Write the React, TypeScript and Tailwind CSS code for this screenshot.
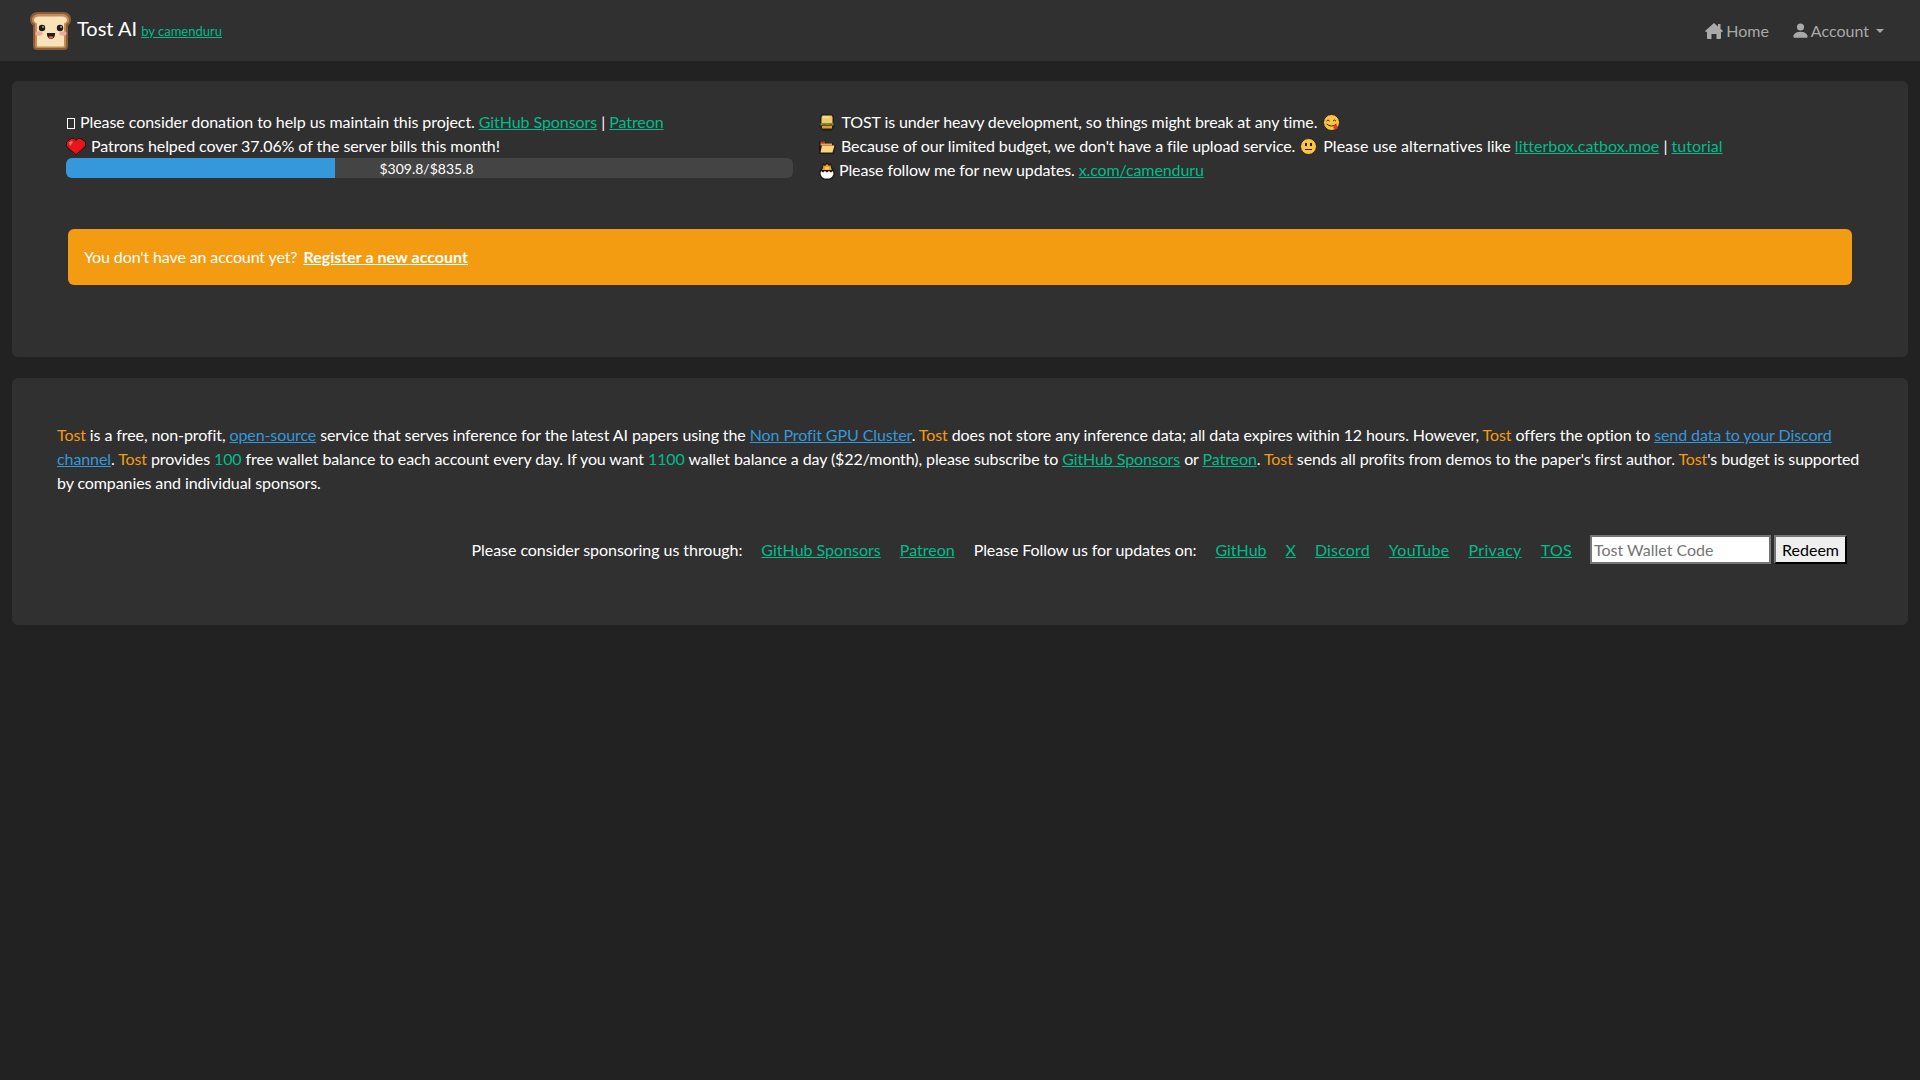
import React from 'react';
import { BsPersonFill } from 'react-icons/bs';

const linkClass = 'text-[#00bc8c] underline';
const blueClass = 'text-[#3498db] underline';
const tostClass = 'text-[#f39c12]';
const greenClass = 'text-[#00bc8c]';

function Toast() {
    return (
        <svg width="41" height="38" viewBox="0 0 41 38" className="shrink-0">
            <path d="M8 0h25c5 0 8 3 8 7.500 0 3-1.500 5-3 6v20.500c0 2.500-1.500 4-3.500 4H6.500C4.500 38 3 36.500 3 34V13.500C1.500 12.500 0 10.500 0 7.500 0 3 3 0 8 0z" fill="#8a5c38" />
            <path d="M9 2h23c4 0 7 2.500 7 5.500 0 2-1 3.500-3 4.500v21.500c0 1.500-.5 2.500-2 2.500H7c-1.500 0-2-1-2-2.500V12C3 11 2 9.500 2 7.500 2 4.500 5 2 9 2z" fill="#c48d58" />
            <path d="M9 4.500h23c3 0 5 1.500 5 3.500 0 1.500-1 2.500-3 3.500V33c0 1-.5 1.500-1 1.500H8c-.5 0-1-.5-1-1.500V11.500C5 10.500 4 9.500 4 8c0-2 2-3.500 5-3.500z" fill="#f8e2b8" />
            <circle cx="12" cy="16" r="3.200" fill="#1d1a1a" />
            <circle cx="30" cy="16" r="3.200" fill="#1d1a1a" />
            <circle cx="13" cy="15" r="0.800" fill="#ffffff" />
            <circle cx="31" cy="15" r="0.800" fill="#ffffff" />
            <ellipse cx="9" cy="21.500" rx="3.600" ry="2.200" fill="#f4a79b" />
            <ellipse cx="33" cy="21.500" rx="3.600" ry="2.200" fill="#f4a79b" />
            <path d="M17 21h8c.5 3-1.500 6-4 6s-4.500-3-4-6z" fill="#2a1a1a" />
            <path d="M18.500 25c1-1 4-1 5 0-.5 1-1.500 1.500-2.500 1.500s-2-.5-2.500-1.500z" fill="#e8625f" />
        </svg>
    );
}

function HomeIcon() {
    return (
        <svg width="18" height="16" viewBox="0 0 18 16" className="mr-[3px]" fill="currentColor">
            <path d="M9 0l4 3.500V1h2.500v4.700L18 8l-1 1.200-1-.8V15a1 1 0 0 1-1 1h-3.500v-5h-5v5H3a1 1 0 0 1-1-1V8.400l-1 .8L0 8z" />
        </svg>
    );
}

function Heart() {
    return (
        <svg width="20" height="17" viewBox="0 0 20 17" className="mr-[1px] inline-block align-[-3px]">
            <path d="M5 .5h3L10 2.500 12 .5h3L19.500 4v4L17 11l-7 5.500L3 11 .5 8V4z" fill="#e8141e" stroke="#2a0808" strokeWidth="1" />
            <path d="M3 4.500L5.500 3 7 4 4 8z" fill="#f9707a" />
            <path d="M12 13.500l5-4 1-2 0 2-4 4z" fill="#a80e16" />
        </svg>
    );
}

function Sandwich() {
    return (
        <svg width="16" height="17" viewBox="0 0 16 17" className="ml-[1px] mr-[3px] inline-block align-[-3px]">
            <path d="M3 0h10l2 2v8l1 2-2 3-2 2H4l-2-2-2-3 1-2V2z" fill="#1f2418" />
            <path d="M3.500 1.500h9l1 1.500V9h-11V3z" fill="#f4c76a" />
            <rect x="4" y="2.500" width="6" height="1.500" fill="#fbe29a" />
            <rect x="1.500" y="9" width="13" height="2.500" fill="#5aa02c" />
            <rect x="4" y="10" width="3" height="1.500" fill="#d83a2a" />
            <rect x="10" y="10" width="3" height="1.500" fill="#d83a2a" />
            <rect x="3" y="12" width="10" height="2.500" fill="#d89a3e" />
        </svg>
    );
}

function Folder() {
    return (
        <svg width="17" height="14" viewBox="0 0 17 14" className="ml-[1px] mr-[1px] inline-block align-[-2px]">
            <path d="M1 1h5l1.500 2H14v2h3l-2.500 9H0V2z" fill="#1d1a14" />
            <rect x="1.500" y="1.500" width="4.500" height="2" fill="#cf3a2c" />
            <path d="M3 5.500h12.500L13.500 12.500H1.500z" fill="#fdd27c" />
            <rect x="1.500" y="3.500" width="11.500" height="2" fill="#e9a94a" />
        </svg>
    );
}

function Hatch() {
    return (
        <svg width="16" height="18" viewBox="0 0 16 18" className="ml-[1px] inline-block align-[-4px]">
            <path d="M4 1l2 1.500L8 0l2 2.500L12 1l1 4 2 3 1 4-2 4-3 2H5l-3-2-2-4 1-4 2-3z" fill="#1d1a14" />
            <path d="M4.500 3l1.500 1 2-2 2 2 1.500-1 .5 3 1 2H3l1-2z" fill="#f59a23" />
            <rect x="6" y="5" width="4" height="2.500" fill="#fbd34c" />
            <path d="M2 9l2 1.500 2-1.500 2 1.500L10 9l2 1.500L14 9l.5 3-1.500 3-2.500 1.500h-5L3 15l-1.500-3z" fill="#ffffff" />
        </svg>
    );
}

function YumFace() {
    return (
        <svg width="17" height="17" viewBox="0 0 17 17" className="ml-[2px] inline-block align-[-3px]">
            <circle cx="8.500" cy="8.500" r="8" fill="#fcc246" stroke="#2a2218" strokeWidth="1" />
            <path d="M3.500 7q1.500-2 3 0M10 7q1.500-2 3 0" fill="none" stroke="#3a2a14" strokeWidth="1" />
            <path d="M3.500 10q5 4 10 0" fill="none" stroke="#3a2a14" strokeWidth="1" />
            <circle cx="12.500" cy="13" r="2.200" fill="#e0392b" />
        </svg>
    );
}

function NeutralFace() {
    return (
        <svg width="17" height="17" viewBox="0 0 17 17" className="ml-[1px] mr-[2px] inline-block align-[-3px]">
            <circle cx="8.500" cy="8.500" r="8" fill="#fcc246" stroke="#2a2218" strokeWidth="1" />
            <rect x="5" y="5" width="2" height="3" fill="#2a2218" />
            <rect x="10" y="5" width="2" height="3" fill="#2a2218" />
            <rect x="5" y="11" width="7" height="1" fill="#2a2218" />
        </svg>
    );
}

export default function App() {
    return (
        <div className="min-h-[1080px] bg-[#222222] text-[16px] leading-[24px] text-white" style={{ fontFamily: 'Lato, sans-serif' }}>
            {/* Navbar */}
            <nav className="flex h-[61px] items-center justify-between bg-[#303030] pl-[30px] pr-[36px]">
                <div className="flex items-center">
                    <Toast />
                    <span className="mb-[6px] ml-[6px] text-[20px]">Tost AI</span>
                    <a className={`ml-[4px] mt-[1px] text-[13px] ${linkClass}`}>by camenduru</a>
                </div>
                <div className="flex items-center gap-[22px] text-[#a9a9a9]">
                    <a className="flex items-center"><HomeIcon />Home</a>
                    <a className="flex items-center">
                        <BsPersonFill className="mr-[1px] h-[19px] w-[19px]" />Account
                        <span className="ml-[7px] h-0 w-0 border-x-[4px] border-t-[4px] border-x-transparent border-t-[#a9a9a9]"></span>
                    </a>
                </div>
            </nav>

            {/* Notices */}
            <section className="mx-[12px] mt-[20px] h-[276px] rounded-[6px] bg-[#303030] pl-[54px] pr-[56px] pt-[29px]">
                <div className="flex">
                    <div className="w-[727px] tracking-[-0.07px]">
                        <div><span className="ml-[1px] mr-[1px] inline-block h-[11px] w-[8px] border border-white align-[-1px]"></span> Please consider donation to help us maintain this project. <a className={linkClass}>GitHub Sponsors</a> | <a className={linkClass}>Patreon</a></div>
                        <div><Heart /> Patrons helped cover 37.06% of the server bills this month!</div>
                        <div className="relative h-[20px] overflow-hidden rounded-[6px] bg-[#444444] pr-[6px] text-center text-[14px] leading-[21px] tracking-normal">
                            <div className="absolute inset-y-0 left-0 w-[37.06%] bg-[#3498db]"></div>
                            <span className="relative">$309.8/$835.8</span>
                        </div>
                    </div>
                    <div className="ml-[25px] tracking-[-0.11px]">
                        <div><Sandwich /> TOST is under heavy development, so things might break at any time. <YumFace /></div>
                        <div><Folder /> Because of our limited budget, we don't have a file upload service. <NeutralFace /> <span className="tracking-[0.02px]">Please use alternatives like <a className={linkClass}>litterbox.catbox.moe</a> | <a className={linkClass}>tutorial</a></span></div>
                        <div><Hatch /> Please follow me for new updates. <a className={linkClass}>x.com/camenduru</a></div>
                    </div>
                </div>
                <div className="ml-[2px] mt-[47px] flex h-[56px] items-center rounded-[6px] bg-[#f39c12] px-[16px]">
                    <span className="tracking-[-0.12px]">You don't have an account yet?</span>
                    <a className="ml-[6px] font-bold tracking-[0.03px] underline">Register a new account</a>
                </div>
            </section>

            {/* About */}
            <section className="mx-[12px] mt-[21px] h-[247px] rounded-[6px] bg-[#303030] pl-[45px] pr-[40px] pt-[45px]">
                <p className="tracking-[-0.095px]">
                    <span className={tostClass}>Tost</span> is a free, non-profit, <a className={blueClass}>open-source</a> service that serves inference for the latest AI papers using the <a className={blueClass}>Non Profit GPU Cluster</a>. <span className={tostClass}>Tost</span> does not store any inference data; all data expires within 12 hours. However, <span className={tostClass}>Tost</span> offers the option to <a className={blueClass}>send data to your Discord channel</a>. <span className={tostClass}>Tost</span> provides <span className={greenClass}>100</span> free wallet balance to each account every day. If you want <span className={greenClass}>1100</span> wallet balance a day ($22/month), please subscribe to <a className={linkClass}>GitHub Sponsors</a> or <a className={linkClass}>Patreon</a>. <span className={tostClass}>Tost</span> sends all profits from demos to the paper's first author. <span className={tostClass}>Tost</span>'s budget is supported by companies and individual sponsors.
                </p>
                <div className="mt-[40px] flex items-center justify-end gap-[19px] pr-[21px]">
                    <span className="tracking-[-0.05px]">Please consider sponsoring us through:</span>
                    <a className={linkClass}>GitHub Sponsors</a>
                    <a className={linkClass}>Patreon</a>
                    <span className="tracking-[-0.08px]">Please Follow us for updates on:</span>
                    <a className={linkClass}>GitHub</a>
                    <a className={linkClass}>X</a>
                    <a className={`tracking-[0.15px] ${linkClass}`}>Discord</a>
                    <a className={`tracking-[0.3px] ${linkClass}`}>YouTube</a>
                    <a className={`tracking-[0.3px] ${linkClass}`}>Privacy</a>
                    <a className={`tracking-[0.3px] ${linkClass}`}>TOS</a>
                    <div className="-ml-[1px] flex items-center gap-[3px]">
                        <input placeholder="Tost Wallet Code" className="h-[29px] w-[181px] border-2 border-[#767676] bg-white px-[2px] text-black placeholder:text-[#757575]" />
                        <button className="h-[29px] w-[73px] border-2 border-b-black border-l-[#767676] border-r-black border-t-[#767676] bg-[#efefef] text-black">Redeem</button>
                    </div>
                </div>
            </section>
        </div>
    );
}
